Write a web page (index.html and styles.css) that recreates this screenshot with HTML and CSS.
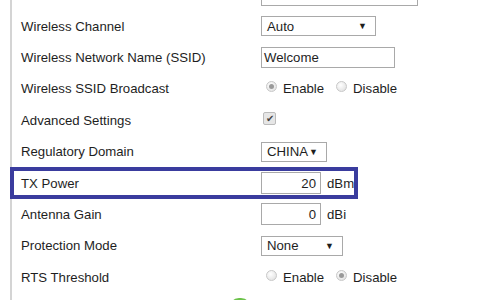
FILE: index.html
```html
<!DOCTYPE html>
<html>
<head>
	<title>Wireless Settings</title>
	<meta name="viewport" content="width=device-width, initial-scale=1.0">
	<link rel="stylesheet" href="styles.css">
</head>
<body>
	<div class="panel">
		<div class="row cut">
			<span class="label"></span>
			<div class="ctl"><span class="select wide"></span></div>
		</div>
		<div class="row">
			<span class="label">Wireless Channel</span>
			<div class="ctl"><span class="select chan">Auto<i>&#9660;</i></span></div>
		</div>
		<div class="row">
			<span class="label">Wireless Network Name (SSID)</span>
			<div class="ctl"><span class="text ssid">Welcome</span></div>
		</div>
		<div class="row">
			<span class="label">Wireless SSID Broadcast</span>
			<div class="ctl">
				<span class="radio on"></span><span class="opt">Enable</span>
				<span class="radio"></span><span class="opt">Disable</span>
			</div>
		</div>
		<div class="row">
			<span class="label">Advanced Settings</span>
			<div class="ctl"><span class="check">&#10004;</span></div>
		</div>
		<div class="row">
			<span class="label">Regulatory Domain</span>
			<div class="ctl"><span class="select domain">CHINA<i>&#9660;</i></span></div>
		</div>
		<div class="row mark">
			<span class="label">TX Power</span>
			<div class="ctl"><span class="text num">20</span><span class="unit">dBm</span></div>
		</div>
		<div class="row">
			<span class="label">Antenna Gain</span>
			<div class="ctl"><span class="text num">0</span><span class="unit">dBi</span></div>
		</div>
		<div class="row">
			<span class="label">Protection Mode</span>
			<div class="ctl"><span class="select prot">None<i>&#9660;</i></span></div>
		</div>
		<div class="row">
			<span class="label">RTS Threshold</span>
			<div class="ctl">
				<span class="radio"></span><span class="opt">Enable</span>
				<span class="radio on"></span><span class="opt">Disable</span>
			</div>
		</div>
		<div class="row tail">
			<span class="label"></span>
			<div class="ctl"><span class="blob"></span></div>
		</div>
	</div>
</body>
</html>
```

FILE: styles.css
```css
html, body {
	margin: 0;
	padding: 0;
	background: #fff;
	color: #1e1e1e;
	font-family: "Liberation Sans", Arial, sans-serif;
	font-size: 13.2px;
	overflow: hidden;
}

.panel {
	margin: -21px 0 0 10px;
	border-left: 2px solid #d4d4d4;
	width: 470px;
}

.row {
	display: grid;
	grid-template-columns: 249px 1fr;
	align-items: center;
	height: 31.4px;
}

.label {
	padding-left: 9px;
	white-space: nowrap;
}

.ctl {
	display: flex;
	align-items: center;
}

.mark {
	margin-left: -2px;
	width: 348px;
	box-sizing: border-box;
	border: 4px solid #3a3c9e;
	grid-template-columns: 247px 1fr;
}

.mark .label {
	padding-left: 7px;
}

.select, .text {
	display: flex;
	align-items: center;
	box-sizing: border-box;
	height: 20px;
	border: 1px solid #a9a9a9;
	background: #fff;
	padding: 0 5px;
}

.select i {
	font-style: normal;
	font-size: 9px;
	margin-left: auto;
	padding-right: 3px;
}

.wide {
	width: 157px;
	margin-top: 3px;
}

.chan {
	width: 115px;
}

.ssid {
	width: 134px;
	height: 21px;
	padding: 0 2px;
}

.domain {
	width: 66px;
}

.prot {
	width: 82px;
}

.num {
	width: 60px;
	height: 22px;
	justify-content: flex-end;
	padding-right: 4px;
}

.unit {
	margin-left: 6px;
}

.radio {
	box-sizing: border-box;
	width: 11px;
	height: 11px;
	border-radius: 50%;
	border: 1px solid #c8c8c8;
	background: radial-gradient(circle at 40% 35%, #fff, #dcdcdc);
	margin: 0 6px 0 5px;
	position: relative;
	top: -2px;
}

.radio.on::after {
	content: "";
	position: absolute;
	left: 2px;
	top: 2px;
	width: 5px;
	height: 5px;
	border-radius: 50%;
	background: #9a9a9a;
}

.opt + .radio {
	margin-left: 12px;
}

.check {
	box-sizing: border-box;
	width: 13px;
	height: 13px;
	margin-left: 2px;
	border: 1px solid #bbb;
	border-radius: 2px;
	background: #e6e6e6;
	font-size: 10px;
	line-height: 11px;
	text-align: center;
	color: #444;
	position: relative;
	top: -2px;
}

.tail {
	align-items: start;
}

.blob {
	margin-left: -32px;
	margin-top: 5px;
	width: 22px;
	height: 10px;
	border-radius: 11px 11px 0 0;
	background: #6cc24a;
}
```
